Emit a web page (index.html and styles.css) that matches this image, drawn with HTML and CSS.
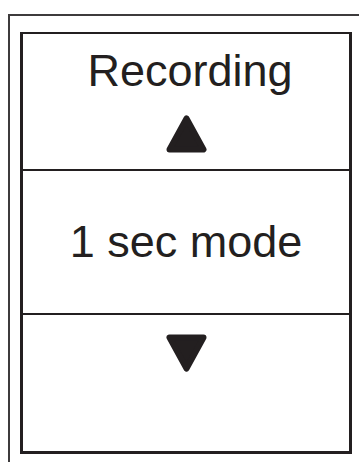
FILE: index.html
```html
<!DOCTYPE html>
<html lang="en">
<head>
  <meta charset="UTF-8">
  <meta name="viewport" content="width=device-width, initial-scale=1.0">
  <title>Recording</title>
  <link rel="stylesheet" href="styles.css">
</head>
<body>
  <div class="device">
    <div class="screen">
      <div class="section top">
        <div class="title">Recording</div>
        <svg class="arrow" width="41" height="38" viewBox="0 0 41 38">
          <polygon points="20.5,3.5 37.5,34.5 3.5,34.5" />
        </svg>
      </div>
      <div class="section middle">
        <div class="value">1 sec mode</div>
      </div>
      <div class="section bottom">
        <svg class="arrow" width="41" height="38" viewBox="0 0 41 38">
          <polygon points="3.5,3.5 37.5,3.5 20.5,34.5" />
        </svg>
      </div>
    </div>
  </div>
</body>
</html>
```

FILE: styles.css
```css
body {
  margin: 0;
  background-color: #fff;
  font-family: "Liberation Sans", Arial, sans-serif;
  color: #231f20;
  overflow: hidden;
}
.device {
  box-sizing: border-box;
  margin: 14px 0 0 8px;
  padding: 16px 0 0 10px;
  height: 448px;
  border-top: 2px solid #3d3b3c;
  border-left: 2px solid #3d3b3c;
}
.screen {
  width: 326px;
  border: 3px solid #231f20;
  border-top-width: 2px;
}
.section {
  display: flex;
  flex-direction: column;
  align-items: center;
}
.top {
  height: 137px;
  padding-top: 12px;
  box-sizing: border-box;
  border-bottom: 2px solid #231f20;
}
.middle {
  height: 144px;
  box-sizing: border-box;
  justify-content: center;
  border-bottom: 2px solid #231f20;
}
.bottom {
  height: 136px;
  padding-top: 19px;
  box-sizing: border-box;
}
.title, .value {
  font-size: 45px;
  line-height: 50px;
}
.title {
  padding-left: 8px;
}
.top .arrow {
  margin-top: 19px;
}
.arrow polygon {
  fill: #231f20;
  stroke: #231f20;
  stroke-width: 6;
  stroke-linejoin: round;
}
```
